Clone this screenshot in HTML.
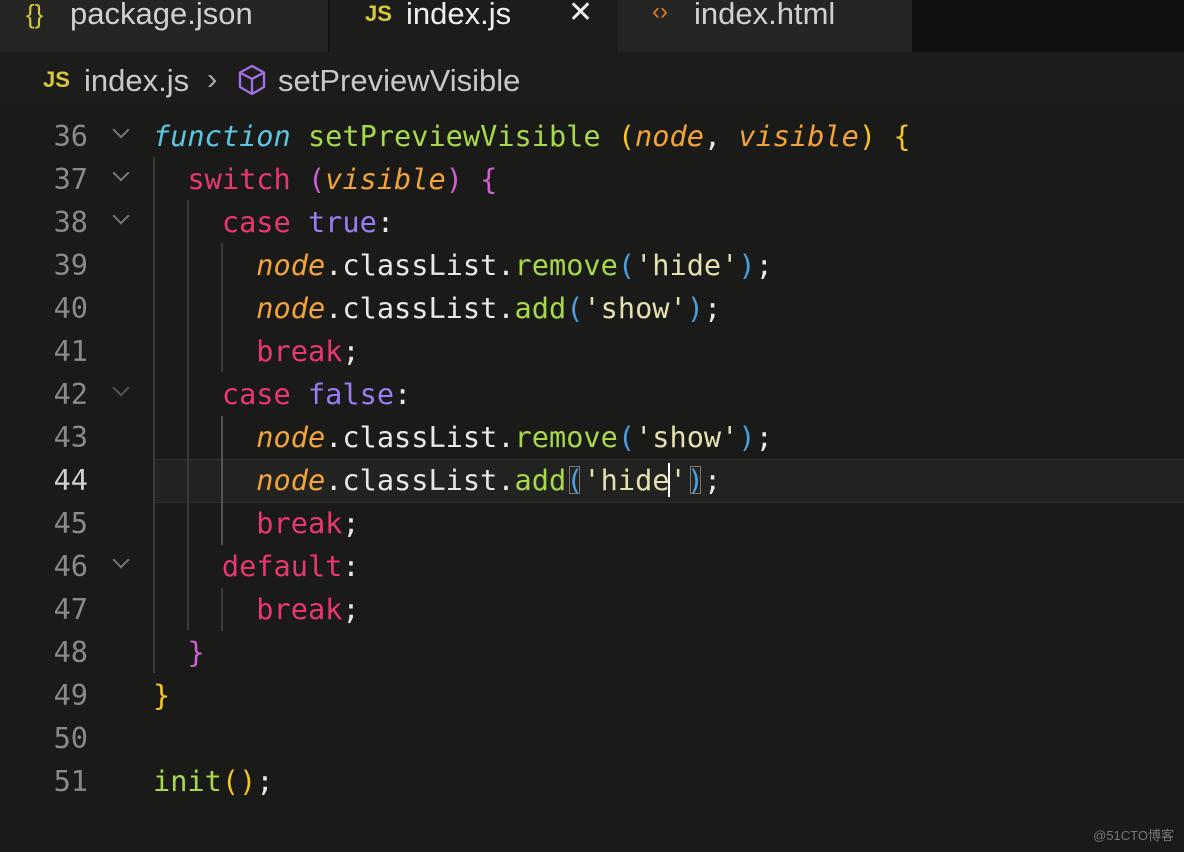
<!DOCTYPE html>
<html><head><meta charset="utf-8"><style>
body{margin:0;width:1184px;height:852px;background:#1a1a19;overflow:hidden;font-family:"Liberation Sans",sans-serif;position:relative}
.tabs{position:absolute;top:0;left:0;width:1184px;height:52px;background:#111113}
.tab{position:absolute;top:0;height:52px;color:#d0d0d0;font-size:31px;line-height:28px}
.bc{position:absolute;top:52px;left:0;width:1184px;height:53px;background:#1c1c1b;color:#c8c8c8;font-size:31px}
.code{position:absolute;left:0;top:0;font-family:"DejaVu Sans Mono","Liberation Mono",monospace;font-size:28.6px}
.ln{position:absolute;left:0;width:88px;text-align:right;color:#8a8a8a;height:43px;line-height:45px}
.tx{position:absolute;left:153px;height:43px;line-height:45px;white-space:pre;color:#e8e8e8}
.fold{position:absolute;left:115px;width:10px;height:10px;border-right:2px solid #777;border-bottom:2px solid #777;transform:rotate(45deg)}
.g{position:absolute;width:2px;background:#3a3a3a}
.k{color:#e8386e}.f{color:#5cc6e2;font-style:italic}.n{color:#a8d84c}.p{color:#f2a33a;font-style:italic}.b{color:#9b7cf2}.s{color:#e4e0b0}.y{color:#f5c623}.m{color:#cf5fd6}.bl{color:#4a9fe0}
</style></head><body>
<div class="tabs">
 <div class="tab" style="left:0;width:328px;background:#252523"><span style="position:absolute;left:26px;top:0px;color:#d8c93a;font-size:26px">{}</span><span style="position:absolute;left:70px;top:0px">package.json</span></div>
 <div class="tab" style="left:330px;width:288px;background:#1c1c1b"><span style="position:absolute;left:35px;top:0px;color:#d8c93a;font-size:22px;font-weight:bold">JS</span><span style="position:absolute;left:76px;top:0px;color:#eee">index.js</span><span style="position:absolute;left:238px;top:-1px;color:#eee;font-size:30px">✕</span></div>
 <div class="tab" style="left:618px;width:294px;background:#252523"><span style="position:absolute;left:34px;top:-2px;color:#e07a2a;font-size:24px">‹›</span><span style="position:absolute;left:76px;top:0px">index.html</span></div>
</div>
<div class="bc">
 <span style="position:absolute;left:43px;top:15px;color:#d8c93a;font-size:22px;font-weight:bold">JS</span>
 <span style="position:absolute;left:84px;top:11px">index.js</span>
 <span style="position:absolute;left:207px;top:9px;color:#aaa">›</span>
 <svg style="position:absolute;left:236px;top:11px" width="32" height="34" viewBox="0 0 32 34"><path d="M16 3 L28 9.5 V24 L16 31 L4 24 V9.5 Z M4 9.5 L16 16 L28 9.5 M16 16 V31" fill="none" stroke="#a070e0" stroke-width="2.4" stroke-linejoin="round"/></svg>
 <span style="position:absolute;left:278px;top:11px">setPreviewVisible</span>
</div>
<div style="position:absolute;left:153px;top:459px;width:1031px;height:42px;background:#222220;border-top:1px solid #2e2e2c;border-bottom:1px solid #2e2e2c"></div>
<div class="code">
<div class="g" style="left:153px;top:157px;height:516px"></div>
<div class="g" style="left:187px;top:200px;height:430px"></div>
<div class="g" style="left:221px;top:243px;height:129px"></div>
<div class="g" style="left:221px;top:416px;height:129px;background:#555"></div>
<div class="g" style="left:221px;top:588px;height:43px"></div>

<div class="ln" style="top:114px">36</div><div class="fold" style="top:124px"></div>
<div class="tx" style="top:114px"><span class="f">function</span> <span class="n">setPreviewVisible</span> <span class="y">(</span><span class="p">node</span>, <span class="p">visible</span><span class="y">)</span> <span class="y">{</span></div>
<div class="ln" style="top:157px">37</div><div class="fold" style="top:167px"></div>
<div class="tx" style="top:157px">  <span class="k">switch</span> <span class="m">(</span><span class="p">visible</span><span class="m">)</span> <span class="m">{</span></div>
<div class="ln" style="top:200px">38</div><div class="fold" style="top:210px"></div>
<div class="tx" style="top:200px">    <span class="k">case</span> <span class="b">true</span>:</div>
<div class="ln" style="top:243px">39</div>
<div class="tx" style="top:243px">      <span class="p">node</span>.classList.<span class="n">remove</span><span class="bl">(</span><span class="s">'hide'</span><span class="bl">)</span>;</div>
<div class="ln" style="top:286px">40</div>
<div class="tx" style="top:286px">      <span class="p">node</span>.classList.<span class="n">add</span><span class="bl">(</span><span class="s">'show'</span><span class="bl">)</span>;</div>
<div class="ln" style="top:329px">41</div>
<div class="tx" style="top:329px">      <span class="k">break</span>;</div>
<div class="ln" style="top:372px">42</div><div class="fold" style="top:382px;border-color:#555"></div>
<div class="tx" style="top:372px">    <span class="k">case</span> <span class="b">false</span>:</div>
<div class="ln" style="top:415px">43</div>
<div class="tx" style="top:415px">      <span class="p">node</span>.classList.<span class="n">remove</span><span class="bl">(</span><span class="s">'show'</span><span class="bl">)</span>;</div>
<div class="ln" style="top:458px;color:#d0d0d0">44</div>
<div class="tx" style="top:458px">      <span class="p">node</span>.classList.<span class="n">add</span><span class="bl" style="outline:1px solid #777;outline-offset:-4px">(</span><span class="s">'hide</span><span class="s" style="border-left:2px solid #fff;margin-left:-2px">'</span><span class="bl" style="outline:1px solid #777;outline-offset:-4px">)</span>;</div>
<div class="ln" style="top:501px">45</div>
<div class="tx" style="top:501px">      <span class="k">break</span>;</div>
<div class="ln" style="top:544px">46</div><div class="fold" style="top:554px"></div>
<div class="tx" style="top:544px">    <span class="k">default</span>:</div>
<div class="ln" style="top:587px">47</div>
<div class="tx" style="top:587px">      <span class="k">break</span>;</div>
<div class="ln" style="top:630px">48</div>
<div class="tx" style="top:630px">  <span class="m">}</span></div>
<div class="ln" style="top:673px">49</div>
<div class="tx" style="top:673px"><span class="y">}</span></div>
<div class="ln" style="top:716px">50</div>
<div class="ln" style="top:759px">51</div>
<div class="tx" style="top:759px"><span class="n">init</span><span class="y">()</span>;</div>
</div>
<div style="position:absolute;right:10px;bottom:8px;color:#777;font-size:13px;font-family:'Liberation Sans','Noto Sans CJK SC',sans-serif">@51CTO博客</div>
</body></html>
